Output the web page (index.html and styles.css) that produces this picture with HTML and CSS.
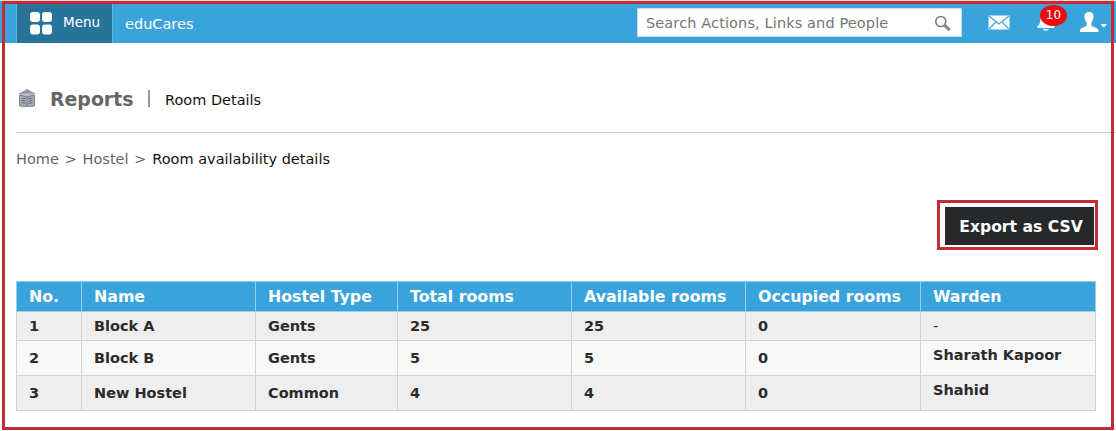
FILE: index.html
```html
<!DOCTYPE html>
<html lang="en">
<head>
<meta charset="utf-8">
<title>Room Details</title>
<link rel="stylesheet" href="styles.css">
</head>
<body>
<header class="topbar">
  <a class="menu"><svg width="23" height="23" viewBox="0 0 23 23"><g fill="#fff"><rect width="10" height="10" rx="3"/><rect x="12" width="10" height="10" rx="3"/><rect y="12.5" width="10" height="10" rx="3"/><rect x="12" y="12.5" width="10" height="10" rx="3"/></g></svg><span>Menu</span></a>
  <span class="brand">eduCares</span>
  <div class="search"><span>Search Actions, Links and People</span>
    <svg width="18" height="18" viewBox="0 0 18 18" fill="none" stroke="#858585"><circle cx="6.8" cy="6.5" r="5" stroke-width="1.7"/><path d="M10.7 10.4l5 4.7" stroke-width="3"/></svg>
  </div>
  <svg class="mail" width="22" height="15" viewBox="0 0 22 15"><path fill="#fff" d="M.5.5h21v14H.5z"/><path d="M1 1l10 8 10-8M1 14l7-7M21 14l-7-7" fill="none" stroke="#3aa3dc" stroke-width="1.1"/></svg>
  <div class="alerts"><svg width="18" height="20" viewBox="0 0 18 20" fill="#fff"><path d="M9 1c-4 0-5.500 3-5.500 6 0 4-.5 6-3 8.500V17h17v-1.500c-2.500-2.500-3-4.500-3-8.500 0-3-1.500-6-5.500-6zM6 18h6c-1 2-5 2-6 0z"/></svg><span class="badge">10</span></div>
  <svg class="user" width="28" height="21" viewBox="0 0 28 21" fill="#fff"><path d="M9 0c3.300 0 4.700 2 4.400 5.300-.2 2.700-1 4-2 5.200v2.800c.5 1.700 6 2.100 6.800 4.200l.3 2.500H0l.2-2.500c.8-2.100 6-2.500 6.500-4.200v-2.800c-1.200-1.200-2-2.500-2.200-5.200C4.300 2 5.700 0 9 0z"/><path d="M20.500 12h6.500l-3.200 3.500z"/></svg>
</header>
<main class="page">
  <div class="heading">
    <svg width="18" height="18" viewBox="0 0 18 18"><path d="M0 5L9 0l9 5z" fill="#94979f"/><path d="M2 4.500h14V16H2z" fill="#b9bdc9"/><path d="M1.500 6v11l7.500.8 7.500-.8V6L9 8zM9 8v9" fill="#a8acb9" stroke="#747985" stroke-width=".9"/><path d="M3.500 9l4 .7M3.500 11.300l4 .7M3.500 13.600l4 .7M14.500 9l-4 .7M14.500 11.300l-4 .7M14.500 13.600l-4 .7" stroke="#656b78" stroke-width="1"/></svg>
    <h1>Reports</h1><i class="divider"></i><span class="sub">Room Details</span>
  </div>
  <nav class="crumbs"><a>Home</a><b>&gt;</b><a>Hostel</a><b>&gt;</b><span>Room availability details</span></nav>
  <div class="actions"><div class="highlight"><button class="export">Export as CSV</button></div></div>
  <table class="rooms">
    <colgroup><col class="c1"><col class="c2"><col class="c3"><col class="c4"><col class="c5"><col class="c6"><col class="c7"></colgroup>
    <thead><tr><th>No.</th><th>Name</th><th>Hostel Type</th><th>Total rooms</th><th>Available rooms</th><th>Occupied rooms</th><th>Warden</th></tr></thead>
    <tbody>
      <tr class="short"><td>1</td><td>Block A</td><td>Gents</td><td>25</td><td>25</td><td>0</td><td class="none">-</td></tr>
      <tr><td>2</td><td>Block B</td><td>Gents</td><td>5</td><td>5</td><td>0</td><td class="warden">Sharath Kapoor</td></tr>
      <tr><td>3</td><td>New Hostel</td><td>Common</td><td>4</td><td>4</td><td>0</td><td class="warden">Shahid</td></tr>
    </tbody>
  </table>
</main>
<div class="outline"></div>
</body>
</html>
```
FILE: styles.css
```css
* { box-sizing: border-box; }
body { margin: 0; height: 431px; overflow: hidden; background: #fff; color: #111; font: 14.5px/18px "DejaVu Sans", sans-serif; }
svg { display: block; flex: none; }
.topbar { display: flex; align-items: flex-start; height: 43px; padding-left: 16px; background: #3aa3dc; border-top: 1px solid #f3dada; color: #fff; }
.menu { display: flex; width: 97px; height: 42px; padding: 11px 0 0 13px; background: #28739a; border: solid #62b5e1; border-width: 0 1px; }
.menu span { margin: 2px 0 0 10px; font-size: 13.5px; line-height: 16px; }
.brand { width: 524px; padding: 14px 0 0 12px; }
.search { display: flex; width: 325px; height: 29px; margin-top: 7px; padding: 6px 9px 0 8px; background: #fff; border: 1px solid #c7dce8; color: #757575; justify-content: space-between; white-space: nowrap; }
.search span { line-height: 17px; letter-spacing: .12px; }
.mail { margin: 14px 0 0 26px; }
.alerts { position: relative; margin: 10px 0 0 27px; }
.badge { position: absolute; left: 3px; top: -6px; width: 27px; height: 21px; border-radius: 50%; background: #ec0b10; font-size: 12px; line-height: 21px; text-align: center; }
.user { margin: 11px 0 0 25px; }
.page { padding-left: 16px; }
.heading { display: flex; height: 90px; padding: 46px 0 0 2px; border-bottom: 1px solid #c9c9c9; }
h1 { margin: -2px 0 0 14px; width: 98px; font-size: 18.9px; line-height: 24px; color: #666; }
.divider { width: 2px; height: 17px; margin-top: 1px; background: #999; }
.sub { margin: 2px 0 0 15px; }
.crumbs { height: 67px; padding-top: 17px; color: #666; }
.crumbs b { font-weight: normal; margin: 0 5.800px; }
.crumbs span { color: #111; }
.actions { display: flex; justify-content: flex-end; padding-right: 18px; }
.highlight { width: 161px; height: 50px; padding: 4px 1px 2px 5px; border: 3px solid #c62a35; }
.export { width: 149px; height: 38px; padding: 2px 0 0 3px; border: 0; background: #27282a; color: #fff; font: bold 15.6px/20px "DejaVu Sans", sans-serif; }
.rooms { width: 1080px; margin-top: 31px; table-layout: fixed; border-collapse: collapse; font-weight: bold; color: #2b2b2b; }
.c1 { width: 65px; } .c2 { width: 174px; } .c3 { width: 142px; } .c4 { width: 174px; } .c5 { width: 174px; } .c6 { width: 175px; } .c7 { width: 175px; }
.rooms th, .rooms td { padding: 0 0 0 12px; border: 1px solid #d3d3d3; text-align: left; white-space: nowrap; }
.rooms th { height: 30px; background: #3aa3dc; color: #fff; font-size: 15.8px; border-color: #9ccfeb; }
.rooms td { height: 35px; background: #eee; }
.rooms .short td { height: 29px; }
.rooms tbody tr:nth-child(2) td { background: #f8f8f8; }
.rooms .warden { padding-bottom: 6px; }
.rooms .none { font-weight: normal; }
.outline { position: absolute; left: 2px; top: 1px; width: 1112px; height: 429px; border: 3px solid #c62a35; pointer-events: none; }
```
